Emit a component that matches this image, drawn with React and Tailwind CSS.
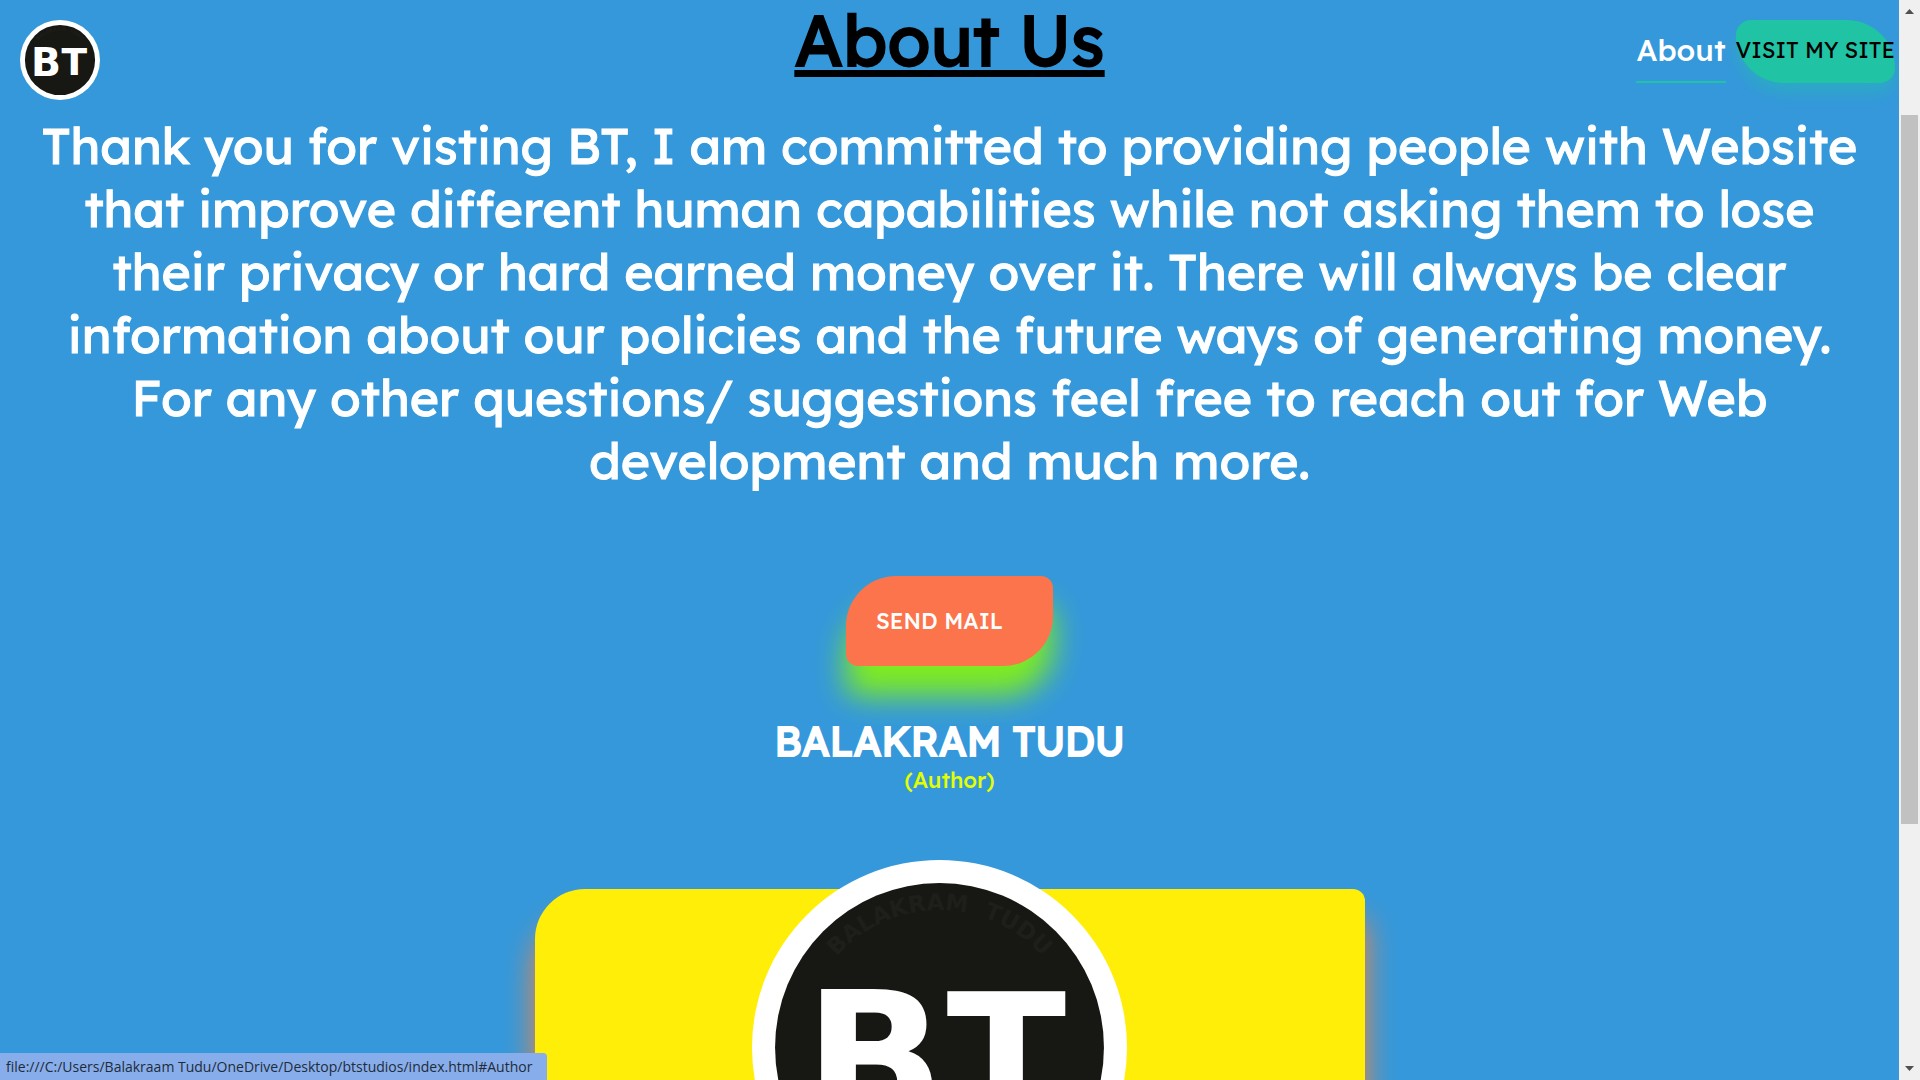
import React from "react";

function Logo({ id, className }) {
  return (
    <svg viewBox="0 0 374 374" className={className} role="img" aria-label="BT">
      <circle cx="187" cy="187" r="187" fill="#ffffff" />
      <circle cx="187" cy="187" r="164" fill="#171813" />
      <path id={id} d="M 50 187 A 137 137 0 0 1 324 187" fill="none" />
      <g fontFamily="'DejaVu Sans', sans-serif" fontWeight="700">
        <text fontSize="23" fill="#1f1e1b" textAnchor="middle">
          <textPath href={"#" + id} startOffset="50%">
            {"BALAKRAM\u00a0\u00a0TUDU"}
          </textPath>
        </text>
        <text x="52" y="262" fontSize="184" fill="#ffffff">B</text>
        <text x="194" y="258" fontSize="175" fill="#ffffff">T</text>
      </g>
    </svg>
  );
}

function Header() {
  return (
    <header className="absolute inset-x-0 top-0 z-10 flex items-start justify-between pt-5 pr-1 pl-5">
      <a href="#home">
        <Logo id="ring-small" className="size-20" />
      </a>
      <nav className="flex items-start gap-[10px]">
        <a
          href="#about"
          className="h-[63px] border-b-2 border-[#20c3a4] text-[30px] leading-[60px] font-medium text-white"
        >
          About
        </a>
        <button
          type="button"
          className="h-[63px] rounded-tl-[15px] rounded-tr-[48px] rounded-br-[15px] rounded-bl-[48px] bg-[#20c3a4] pb-[2px] text-[22px] font-normal whitespace-nowrap text-black shadow-[0_10px_15px_rgba(32,195,164,0.4)]"
        >
          VISIT MY SITE
        </button>
      </nav>
    </header>
  );
}

function ScrollBar() {
  return (
    <div className="flex w-[21px] shrink-0 flex-col items-center bg-[#f0f0f0] py-[9px]">
      <svg viewBox="0 0 9 5" className="h-[5px] w-[9px]" fill="#505050">
        <path d="M0 5 4.5 0 9 5Z" />
      </svg>
      <div className="flex w-full grow flex-col px-[2px] pt-[101px]">
        <div className="h-[709px] bg-[#c1c1c1]" />
      </div>
      <svg viewBox="0 0 9 5" className="h-[5px] w-[9px]" fill="#505050">
        <path d="M0 0 4.5 5 9 0Z" />
      </svg>
    </div>
  );
}

export default function App() {
  return (
    <div className="flex h-screen overflow-hidden bg-[#3598db] font-['Lexend','Inter',sans-serif]">
      <div className="relative min-w-0 grow overflow-hidden">
        <Header />
        <main className="flex flex-col items-center text-center">
          <h1 className="text-[70px] leading-[80px] font-normal text-black underline decoration-[7px] underline-offset-[4px] [-webkit-text-stroke:2px_black]">
            About Us
          </h1>
          <p className="mt-[34px] text-[50px] leading-[63px] font-normal whitespace-nowrap text-white [-webkit-text-stroke:1px_white]">
            Thank you for visting BT, I am committed to providing people with Website
            <br />
            that improve different human capabilities while not asking them to lose
            <br />
            their privacy or hard earned money over it. There will always be clear
            <br />
            information about our policies and the future ways of generating money.
            <br />
            For any other questions/ suggestions feel free to reach out for Web
            <br />
            development and much more.
          </p>
          <button
            type="button"
            className="mt-[84px] h-[90px] rounded-tl-[50px] rounded-tr-[12px] rounded-br-[50px] rounded-bl-[12px] bg-[#fc744b] pr-[50px] pl-[30px] text-[22px] font-medium text-white shadow-[0_30px_30px_#7fec20]"
          >
            SEND MAIL
          </button>
          <h2 className="mt-[50px] text-[40px] leading-[50px] font-normal text-white [-webkit-text-stroke:2px_white]">
            BALAKRAM TUDU
          </h2>
          <p className="text-[22px] leading-[28px] font-medium text-[#e1ff00]">(Author)</p>
          <section className="mt-[95px] flex h-[420px] w-[830px] justify-center rounded-tl-[50px] rounded-tr-[12px] bg-[#ffee08] pr-[21px] shadow-[0_30px_30px_#f8843c]">
            <Logo id="ring-large" className="-mt-[29px] size-[375px]" />
          </section>
        </main>
        <div className="absolute bottom-0 left-0 h-[27px] rounded-tr-[4px] bg-[#87aeea] pr-[15px] pl-[6px] font-['Open_Sans','Noto_Sans',sans-serif] text-[14px] leading-[27px] text-[#222b3a]">
          file:///C:/Users/Balakraam Tudu/OneDrive/Desktop/btstudios/index.html#Author
        </div>
      </div>
      <ScrollBar />
    </div>
  );
}
